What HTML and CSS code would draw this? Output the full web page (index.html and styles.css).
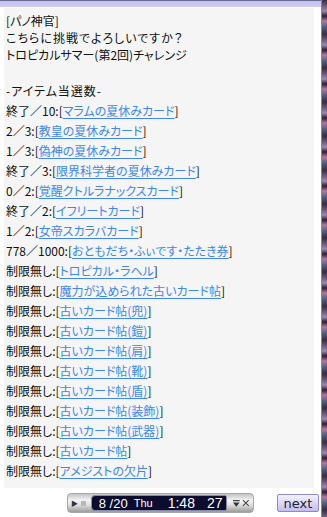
FILE: index.html
```
<!DOCTYPE html>
<html lang="ja">
  <head>
    <meta charset="UTF-8" />
    <title>パノ神官</title>
    <link rel="stylesheet" href="styles.css">
  </head>
  <body>
    <div class="screen">
      <div class="main">
        <div class="topbar"></div>
        <div class="msg">
          <div class="head">
            <p>[パノ神官]</p>
            <p>こちらに挑戦でよろしいですか？</p>
            <p>トロピカルサマー(第2回)チャレンジ</p>
            <p>&nbsp;</p>
          </div>
          <ul class="items">
            <li>-アイテム当選数-</li>
            <li>終了／10:[<a href="#">マラムの夏休みカード</a>]</li>
            <li>2／3:[<a href="#">教皇の夏休みカード</a>]</li>
            <li>1／3:[<a href="#">偽神の夏休みカード</a>]</li>
            <li>終了／3:[<a href="#">限界科学者の夏休みカード</a>]</li>
            <li>0／2:[<a href="#">覚醒クトルラナックスカード</a>]</li>
            <li>終了／2:[<a href="#">イフリートカード</a>]</li>
            <li>1／2:[<a href="#">女帝スカラバカード</a>]</li>
            <li>778／1000:[<a href="#">おともだち・ふぃです・たたき券</a>]</li>
            <li>制限無し:[<a href="#">トロピカル・ラヘル</a>]</li>
            <li>制限無し:[<a href="#">魔力が込められた古いカード帖</a>]</li>
            <li>制限無し:[<a href="#">古いカード帖(兜)</a>]</li>
            <li>制限無し:[<a href="#">古いカード帖(鎧)</a>]</li>
            <li>制限無し:[<a href="#">古いカード帖(肩)</a>]</li>
            <li>制限無し:[<a href="#">古いカード帖(靴)</a>]</li>
            <li>制限無し:[<a href="#">古いカード帖(盾)</a>]</li>
            <li>制限無し:[<a href="#">古いカード帖(装飾)</a>]</li>
            <li>制限無し:[<a href="#">古いカード帖(武器)</a>]</li>
            <li>制限無し:[<a href="#">古いカード帖</a>]</li>
            <li>制限無し:[<a href="#">アメジストの欠片</a>]</li>
          </ul>
        </div>
        <div class="footer">
          <div class="clock">
            <span class="ctrl play">&#9654;</span>
            <span class="ctrl stop"></span>
            <div class="display">
              <span class="d-date">8 /20</span>
              <span class="d-day">Thu</span>
              <span class="d-time">1:48</span>
              <span class="d-sec">27</span>
            </div>
            <svg class="icon" width="9" height="9" viewBox="0 0 9 9">
              <path d="M1 1.5h7" stroke="#333" stroke-width="1.2" />
              <path d="M1 3.5h7L4.5 8z" fill="#333" />
            </svg>
            <svg class="icon" width="8" height="8" viewBox="0 0 8 8">
              <path d="M1 1l6 6M7 1L1 7" stroke="#444" stroke-width="1.1" />
            </svg>
          </div>
          <button class="next">next</button>
        </div>
      </div>
      <div class="edge"></div>
    </div>
  </body>
</html>
```

FILE: styles.css
```
html,
body {
  margin: 0;
  padding: 0;
  background: #ffffff;
}
body {
  width: 327px;
  height: 517px;
  overflow: hidden;
  font-family: "Noto Sans CJK JP", "Noto Sans", sans-serif;
  font-size: 12px;
  color: #111111;
}
.screen {
  display: flex;
  height: 517px;
}
.main {
  width: 321px;
  display: flex;
  flex-direction: column;
}
.topbar {
  height: 6px;
  border-top: 1px solid #6c6a94;
  background: linear-gradient(#c4c0ee, #cecbf2);
  margin-bottom: 1px;
}
.msg {
  margin-left: 4px;
  width: 310px;
  height: 480px;
  box-sizing: border-box;
  padding: 4px 0 0 2px;
  background: #f5f5f5;
  font-feature-settings: "palt";
}
.head p {
  margin: 0;
  line-height: 17px;
  height: 17px;
}
.head p:nth-child(2) {
  letter-spacing: 1px;
}
.items {
  list-style: none;
  margin: 1px 0 0 0;
  padding: 0;
}
.items li {
  line-height: 20px;
  height: 20px;
  white-space: nowrap;
}
.items li:first-child {
  letter-spacing: 1px;
}
.items a {
  color: #3f86ee;
  text-decoration: underline;
  text-underline-offset: 2px;
}
.footer {
  display: flex;
  justify-content: flex-end;
  align-items: center;
  gap: 23px;
  padding: 5px 2px 0 0;
}
.clock {
  width: 187px;
  height: 20px;
  box-sizing: border-box;
  display: flex;
  align-items: center;
  gap: 2px;
  padding: 0 3px;
  border-radius: 4px;
  background: linear-gradient(#c4c4c4, #f4f4f4 35%, #e0e0e0 60%, #9c9c9c);
  border: 1px solid #a8a8a8;
}
.ctrl {
  color: #333333;
  font-size: 7px;
  width: 6px;
}
.stop {
  width: 5px;
  height: 5px;
  background: #b8b8b8;
  margin: 0 3px 0 2px;
}
.display {
  width: 142px;
  height: 16px;
  box-sizing: border-box;
  display: flex;
  align-items: center;
  padding-left: 7px;
  background: #0c0c2e;
  border: 1px solid #8888a8;
  border-radius: 4px 2px 2px 4px;
  color: #ffffff;
  font-family: "Liberation Sans", sans-serif;
  font-size: 13px;
  white-space: pre;
  margin-right: 3px;
}
.d-day {
  margin-left: 6px;
  font-size: 11px;
}
.d-time {
  margin-left: 15px;
  font-size: 14px;
}
.d-sec {
  margin-left: 12px;
  font-size: 14px;
}
.icon {
  display: block;
}
.next {
  width: 42px;
  height: 18px;
  padding: 0;
  border: 1px solid #9088cc;
  border-radius: 2px;
  background: linear-gradient(#f4f2ff, #d8d2f6 60%, #c4bcee);
  font-family: "DejaVu Sans", sans-serif;
  font-size: 13px;
  line-height: 15px;
  color: #222222;
}
.edge {
  width: 6px;
  border-left: 1px solid #8a7cd2;
  box-sizing: border-box;
  background: repeating-linear-gradient(
    #3a2c3e 0px,
    #6e5a78 6px,
    #9a8ab0 11px,
    #2e2030 16px,
    #b07aa0 21px,
    #54607e 27px,
    #3a2c3e 34px
  );
}
```
